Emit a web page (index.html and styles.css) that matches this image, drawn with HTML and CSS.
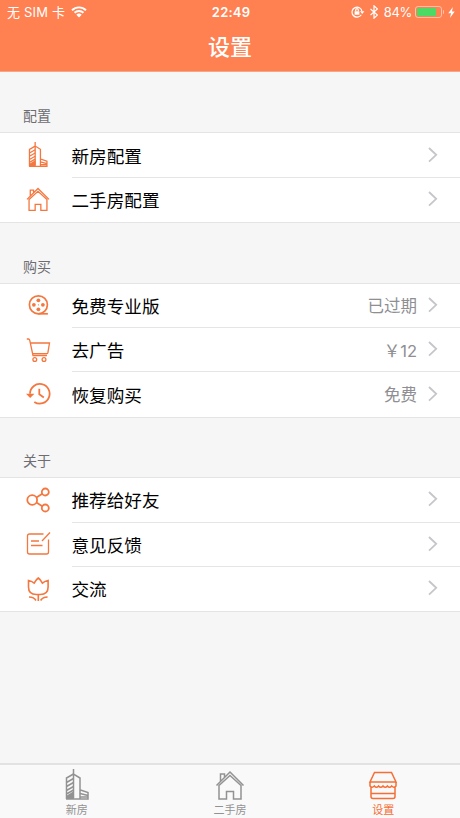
FILE: index.html
```html
<!DOCTYPE html>
<html lang="zh-CN">
  <head>
    <meta charset="UTF-8" />
    <meta name="viewport" content="width=device-width, initial-scale=1.0" />
    <title>设置</title>
    <link rel="stylesheet" href="styles.css">
  </head>
  <body>
    <svg class="symbols">
      <symbol id="building" viewBox="0 0 24 32">
        <path d="M8.500 0v6M8.500 29V5l6.500 4v21M15.500 21l7.500 2.500V30H1" />
        <path d="M1.500 30V9l7-4M1.500 13.500l7-4M1.500 17.500l7-4M1.500 21.500l7-4M1.500 25l7-4M15 24.500l8 2M15 28h8" />
        <path class="solid" d="M1 27l8-5v8H1z" />
      </symbol>
      <symbol id="house" viewBox="0 0 30 32">
        <path d="M1.500 16.500L15 3l13.500 13.500M5.500 12V5h4v3.500M4 16v14h7.500v-7.500h7V30H26V16M4 16.500L15 6.500l11 10" />
      </symbol>
      <symbol id="arrow" viewBox="0 0 10 16">
        <path d="M1 1l7.200 6.800L1 14.600" />
      </symbol>
    </svg>

    <div class="header">
      <div class="status">
        <div class="status-left">
          <span>无 SIM 卡</span>
          <svg class="wifi" viewBox="0 0 16 12">
            <path d="M1 4.200a10 10 0 0 1 14 0M3.500 6.800a6.400 6.400 0 0 1 9 0" />
            <path class="solid" d="M5.300 8.700a4 4 0 0 1 5.400 0L8 11.500z" />
          </svg>
        </div>
        <span class="time">22:49</span>
        <div class="status-right">
          <svg class="lock" viewBox="0 0 14 12">
            <path d="M10.300 8.800A5 5 0 1 1 11 5.500" />
            <path class="solid" d="M9 5.200h4.400L11.200 8zM3.600 5.200h4.800v3.600H3.600z" />
            <path d="M4.700 5.200V4a1.300 1.300 0 0 1 2.600 0v1.200" />
          </svg>
          <svg class="bluetooth" viewBox="0 0 8 14">
            <path d="M.5 4l7 6L4 13.200V.8L7.500 4l-7 6" />
          </svg>
          <span class="percent">84%</span>
          <div class="battery"><div class="battery-level"></div></div>
          <div class="battery-cap"></div>
          <svg class="bolt" viewBox="0 0 7 12">
            <path d="M5 0L0 6.800h3L1.800 12 7 4.800H4z" />
          </svg>
        </div>
      </div>
      <h1>设置</h1>
    </div>

    <div class="content">
      <div class="section">
        <h2>配置</h2>
        <ul class="list">
          <li>
            <svg class="icon building"><use href="#building" /></svg>
            <div class="row"><span>新房配置</span><svg class="arrow"><use href="#arrow" /></svg></div>
          </li>
          <li>
            <svg class="icon house"><use href="#house" /></svg>
            <div class="row"><span>二手房配置</span><svg class="arrow"><use href="#arrow" /></svg></div>
          </li>
        </ul>
      </div>

      <div class="section">
        <h2>购买</h2>
        <ul class="list">
          <li>
            <svg class="icon" viewBox="0 0 26 26">
              <circle cx="13.400" cy="12.800" r="9" stroke-width="1.700" />
              <path d="M13.400 21.800h9.500" stroke-width="1.700" />
              <g class="solid">
                <circle cx="13.400" cy="8.300" r="1.900" /><circle cx="13.400" cy="17.300" r="1.900" />
                <circle cx="8.900" cy="12.800" r="1.900" /><circle cx="17.900" cy="12.800" r="1.900" />
                <circle cx="13.400" cy="12.800" r=".6" />
              </g>
            </svg>
            <div class="row"><span>免费专业版</span><span class="value">已过期</span><svg class="arrow"><use href="#arrow" /></svg></div>
          </li>
          <li>
            <svg class="icon" viewBox="0 0 26 26">
              <path d="M1.800 2h1.600q1 0 1.300 1.200L8 18.500h14M5.200 6h19.300l-1.600 9.700q-.2 1-1.200 1H7.500" />
              <circle cx="9.800" cy="22.500" r="1.900" /><circle cx="19" cy="22.500" r="1.900" />
            </svg>
            <div class="row"><span>去广告</span><span class="value">￥12</span><svg class="arrow"><use href="#arrow" /></svg></div>
          </li>
          <li>
            <svg class="icon" viewBox="0 0 26 26">
              <path d="M5 12.800a9.800 9.800 0 1 1 4.300 8.100M14.300 7.800v5.500l4.500 3.200" stroke-width="1.800" />
              <path class="solid" d="M1 12.800h8.400l-4.200 4.200z" />
            </svg>
            <div class="row"><span>恢复购买</span><span class="value">免费</span><svg class="arrow"><use href="#arrow" /></svg></div>
          </li>
        </ul>
      </div>

      <div class="section">
        <h2>关于</h2>
        <ul class="list">
          <li>
            <svg class="icon" viewBox="0 0 26 26">
              <g stroke-width="1.800">
                <circle cx="7.200" cy="13" r="4.900" /><circle cx="20.300" cy="5" r="3.500" /><circle cx="20.300" cy="21" r="3.500" />
                <path d="M11.400 10.400l5.900-3.600M11.400 15.600l5.900 3.600" />
              </g>
            </svg>
            <div class="row"><span>推荐给好友</span><svg class="arrow"><use href="#arrow" /></svg></div>
          </li>
          <li>
            <svg class="icon" viewBox="0 0 26 26">
              <path d="M18.500 3H4.500q-2 0-2 2v16q0 2 2 2h17q2 0 2-2V8.500M6 10h8M6 14.500h11.500M17 10l8-8.500" />
            </svg>
            <div class="row"><span>意见反馈</span><svg class="arrow"><use href="#arrow" /></svg></div>
          </li>
          <li>
            <svg class="icon" viewBox="0 0 26 26">
              <path d="M3.500 4.500q3 .5 5.700 2.600Q11 3.500 13.300 2q2.300 1.500 4.100 5.100 2.700-2.100 5.700-2.600V11q0 7.500-7.800 7.500h-4Q3.500 18.500 3.500 11zM13.300 18.500V25M4 21q5 0 7 3.500M22.600 21q-5 0-7 3.500" stroke-width="1.600" />
            </svg>
            <div class="row"><span>交流</span><svg class="arrow"><use href="#arrow" /></svg></div>
          </li>
        </ul>
      </div>
    </div>

    <div class="tabs">
      <div class="tab">
        <svg class="tab-icon"><use href="#building" /></svg>
        <span>新房</span>
      </div>
      <div class="tab">
        <svg class="tab-icon"><use href="#house" /></svg>
        <span>二手房</span>
      </div>
      <div class="tab active">
        <svg class="tab-icon" viewBox="0 0 30 32">
          <path d="M6.500 3.500h17L28 13H2zM2 13v4q2 2.500 4.300 0 2.100 2.500 4.300 0 2.200 2.500 4.400 0 2.200 2.500 4.400 0 2.200 2.500 4.300 0 2.300 2.500 4.300 0v-4M3 18v9.500q0 2 2 2h20q2 0 2-2V18M3 24.500h24" />
        </svg>
        <span>设置</span>
      </div>
    </div>
  </body>
</html>
```

FILE: styles.css
```css
* {
  box-sizing: border-box;
}

body {
  background-color: #f6f6f6;
  color: #000;
  display: flex;
  flex-direction: column;
  font-family: "Inter", "Noto Sans CJK SC", sans-serif;
  height: 100vh;
  margin: 0;
  overflow: hidden;
}

svg {
  fill: none;
  flex-shrink: 0;
  stroke: currentColor;
}

.solid {
  fill: currentColor;
  stroke: none;
}

.symbols {
  display: none;
}

.header {
  background-color: #ff8050;
  border-bottom: 1px solid #f0a98d;
  color: #fff;
  height: 72px;
}

.status {
  align-items: center;
  display: grid;
  font-size: 13px;
  grid-template-columns: 1fr auto 1fr;
  height: 24px;
  line-height: 24px;
  padding: 0 5px 0 7px;
}

.status-left,
.status-right {
  align-items: center;
  display: flex;
}

.status-left {
  gap: 6px;
  letter-spacing: 0.2px;
}

.status-right {
  justify-content: flex-end;
}

.wifi {
  height: 12px;
  stroke-width: 1.9;
  width: 16px;
}

.time {
  font-weight: 600;
  letter-spacing: 0.2px;
}

.lock {
  height: 12px;
  margin-right: 5px;
  stroke-width: 1.2;
  width: 14px;
}

.bluetooth {
  height: 14px;
  margin-right: 6px;
  stroke-width: 1.2;
  width: 8px;
}

.percent {
  letter-spacing: -0.3px;
  margin-right: 3px;
}

.battery {
  border: 1px solid #ffc3aa;
  border-radius: 3px;
  height: 12px;
  padding: 1px;
  width: 27px;
}

.battery-level {
  background-color: #4cd964;
  border-radius: 1px;
  height: 8px;
  width: 84%;
}

.battery-cap {
  background-color: #ffc3aa;
  border-radius: 0 2px 2px 0;
  height: 4px;
  margin: 0 4px 0 1px;
  width: 1px;
}

.bolt {
  fill: #fff;
  height: 11px;
  stroke: none;
  width: 7px;
}

h1 {
  font-size: 22px;
  font-weight: 500;
  line-height: 46px;
  margin: 0;
  text-align: center;
}

.content {
  flex: 1;
}

h2 {
  color: #6d6d72;
  font-size: 14px;
  font-weight: 400;
  height: 61.4px;
  line-height: 20px;
  margin: 0;
  padding: 34.4px 23px 0;
}

.list {
  background-color: #fff;
  box-shadow: 0 0 0 1px #e4e4e5;
  list-style: none;
  margin: 0;
  padding: 0;
}

.list li {
  align-items: center;
  display: flex;
  height: 44.4px;
  padding-left: 25px;
}

.icon {
  color: #f4773f;
  height: 26px;
  margin: -1px 20.5px 0 0;
  stroke-width: 1.3;
  width: 26px;
}

.icon.building,
.icon.house {
  stroke-width: 1.6;
}

.row {
  align-items: center;
  border-bottom: 1px solid #e5e5e6;
  display: flex;
  flex: 1;
  font-size: 17.6px;
  height: 100%;
  padding-right: 22px;
}

li:last-child .row {
  border-bottom-color: transparent;
}

.value {
  color: #8e8e93;
  font-size: 16.5px;
  margin-left: auto;
}

.arrow {
  color: #c5c5ca;
  height: 16px;
  margin: -1px 0 0 auto;
  stroke-width: 1.8;
  width: 10px;
}

.value + .arrow {
  margin-left: 11px;
}

.tabs {
  background-color: #f9f9f9;
  border-top: 2px solid #e2e2e2;
  display: flex;
  height: 55px;
}

.tab {
  align-items: center;
  color: #929292;
  display: flex;
  flex: 1;
  flex-direction: column;
  font-size: 11px;
  line-height: 16px;
  padding-top: 4px;
}

.tab-icon {
  height: 32px;
  margin-bottom: 1px;
  stroke-width: 1.5;
  width: 30px;
}

.tab.active {
  color: #f56e35;
}
```
